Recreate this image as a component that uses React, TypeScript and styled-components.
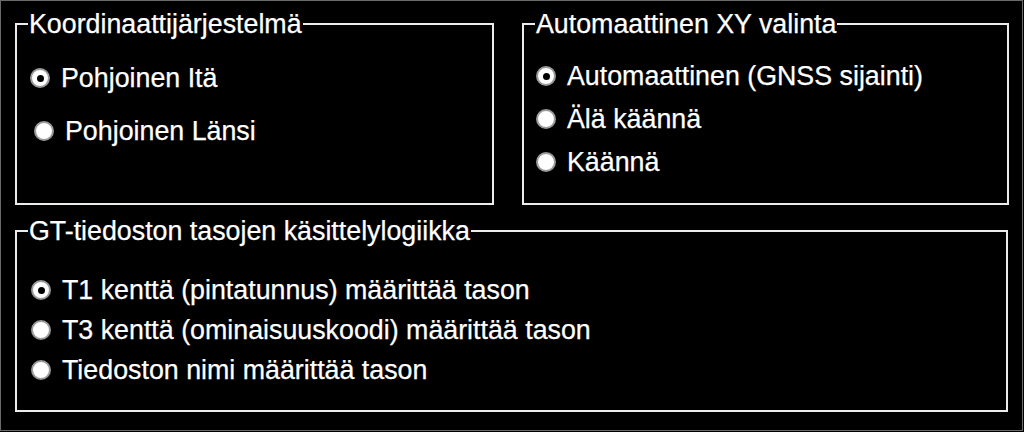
import styled, { createGlobalStyle } from "styled-components";

const Global = createGlobalStyle`
  html, body {
    margin: 0;
    padding: 0;
    background: #000;
  }
`;

const Frame = styled.div`
  box-sizing: border-box;
  width: 1023px;
  height: 431px;
  border: 1px solid #6a6a6a;
  background: #000;
  padding: 9px 14px 0 14px;
  display: flex;
  flex-direction: column;
  gap: 12px;
  font-family: "Liberation Sans", Arial, sans-serif;
  font-size: 26.8px;
  color: #fff;
  -webkit-text-stroke: 0.25px #fff;
`;

const TopRow = styled.div`
  display: grid;
  grid-template-columns: 479px 487px;
  column-gap: 28px;
`;

const Group = styled.fieldset`
  box-sizing: border-box;
  margin: 0;
  padding: 0;
  height: 195px;
  min-width: 0;
  border: 2px solid #ececec;
`;

const Legend = styled.legend`
  margin-left: 11px;
  padding: 0 1px;
  line-height: 28px;
`;

const Options = styled.div<{ $top: number; $gap: number; $left: number }>`
  display: flex;
  flex-direction: column;
  gap: ${(p) => p.$gap}px;
  padding-top: ${(p) => p.$top}px;
  padding-left: ${(p) => p.$left}px;
`;

const Option = styled.label<{ $indent?: number }>`
  display: flex;
  align-items: center;
  gap: 11px;
  height: 30px;
  margin-left: ${(p) => p.$indent ?? 0}px;
  white-space: nowrap;
  cursor: default;
`;

const Radio = styled.input.attrs({ type: "radio" })`
  appearance: none;
  -webkit-appearance: none;
  box-sizing: border-box;
  margin: 0;
  width: 20px;
  height: 20px;
  flex: none;
  border-radius: 50%;
  border: 2px solid #9a9a9a;
  background: radial-gradient(circle, #fff 0 60%, #e8e8e8 100%);
  display: grid;
  place-items: center;

  &:checked::after {
    content: "";
    width: 7px;
    height: 7px;
    border-radius: 50%;
    background: #000;
  }
`;

export default function App() {
  return (
    <>
      <Global />
      <Frame>
        <TopRow>
          <Group>
            <Legend>Koordinaattijärjestelmä</Legend>
            <Options $top={25} $gap={23} $left={13}>
              <Option>
                <Radio name="coord" defaultChecked />
                Pohjoinen Itä
              </Option>
              <Option $indent={4}>
                <Radio name="coord" />
                Pohjoinen Länsi
              </Option>
            </Options>
          </Group>
          <Group>
            <Legend>Automaattinen XY valinta</Legend>
            <Options $top={23} $gap={13} $left={12}>
              <Option>
                <Radio name="xy" defaultChecked />
                Automaattinen (GNSS sijainti)
              </Option>
              <Option>
                <Radio name="xy" />
                Älä käännä
              </Option>
              <Option>
                <Radio name="xy" />
                Käännä
              </Option>
            </Options>
          </Group>
        </TopRow>
        <Group>
          <Legend>GT-tiedoston tasojen käsittelylogiikka</Legend>
          <Options $top={30} $gap={10} $left={14}>
            <Option>
              <Radio name="gt" defaultChecked />
              T1 kenttä (pintatunnus) määrittää tason
            </Option>
            <Option>
              <Radio name="gt" />
              T3 kenttä (ominaisuuskoodi) määrittää tason
            </Option>
            <Option>
              <Radio name="gt" />
              Tiedoston nimi määrittää tason
            </Option>
          </Options>
        </Group>
      </Frame>
    </>
  );
}
